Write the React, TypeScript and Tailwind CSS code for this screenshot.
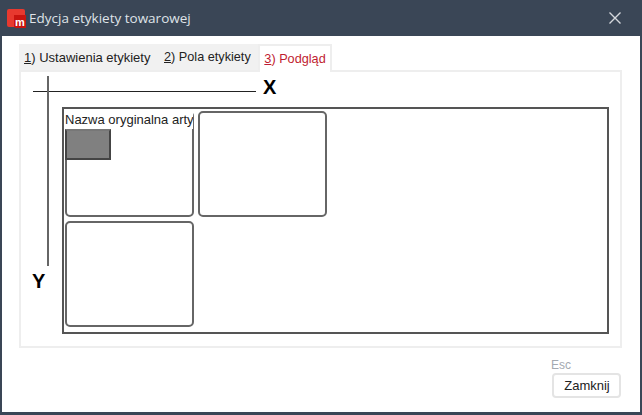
const labels = [
  { id: "a", pos: "left-[1px] top-[2px]" },
  { id: "b", pos: "left-[134px] top-[2px]" },
  { id: "c", pos: "left-[1px] top-[112px]" },
];

function AppIcon() {
  return (
    <svg width="19" height="19" viewBox="0 0 19 19" className="shrink-0">
      <rect x="0" y="0" width="18" height="18" rx="2" fill="#e8392f" />
      <path d="M7 6h12v13H9a2 2 0 0 1-2-2z" fill="#c9140f" />
      <text x="13" y="16.5" textAnchor="middle" fontSize="11" fontWeight="700" fill="#fff" fontFamily="'Liberation Sans', sans-serif">
        m
      </text>
    </svg>
  );
}

export default function App() {
  return (
    <div className="flex h-[415px] w-[642px] flex-col bg-[#3a4656] font-['Liberation_Sans',Arial,sans-serif]">
      <div className="flex h-[36px] shrink-0 items-center pl-[7px] pr-[20px]">
        <AppIcon />
        <span className="ml-[3px] flex-1 font-['Open_Sans',sans-serif] text-[13.5px] text-[#dfe3e8]">Edycja etykiety towarowej</span>
        <svg width="14" height="14" viewBox="0 0 14 14" fill="none" stroke="#d5d8dc" strokeWidth="1.4">
          <path d="M1.5 1.5l11 11M12.5 1.5l-11 11" />
        </svg>
      </div>

      <div className="mx-[2px] mb-[3px] flex flex-1 flex-col bg-white px-[17px] pt-[8px]">
        <div className="flex h-[26px] leading-none">
          <div className="flex w-[140px] items-center bg-[#f1f1f1] pl-[5px] text-[13px] text-[#222]">
            <span><u>1</u>) Ustawienia etykiety</span>
          </div>
          <div className="flex w-[99px] items-center bg-[#f1f1f1] pl-[5px] text-[12.7px] text-[#222]">
            <span><u>2</u>) Pola etykiety</span>
          </div>
          <div className="z-10 -mb-[2px] flex w-[74px] items-center justify-center border-x-2 border-t-2 border-[#eeeeee] bg-white text-[12.7px] text-[#c01c30]">
            <span><u>3</u>) Podgląd</span>
          </div>
        </div>

        <div className="relative h-[278px] w-[603px] border-2 border-[#eeeeee] bg-white">
          {/* axes */}
          <div className="absolute left-[12px] top-[19px] h-px w-[223px] bg-[#222]" />
          <div className="absolute left-[26px] top-[4px] h-[190px] w-[2px] bg-[#666]" />
          <span className="absolute left-[242px] top-[4px] text-[20px] font-bold leading-[22px] text-black">X</span>
          <span className="absolute left-[11px] top-[198px] text-[20px] font-bold leading-[22px] text-black">Y</span>

          {/* label sheet */}
          <div className="absolute left-[41px] top-[35px] h-[227px] w-[547px] border-2 border-[#555]">
            {labels.map((l) => (
              <div key={l.id} className={`absolute ${l.pos} h-[106px] w-[129px] overflow-hidden rounded-[5px] border-2 border-[#666] bg-white`} />
            ))}
            {/* first label's content sits on top of its rounded corner */}
            <div className="absolute left-[1px] top-0 h-[20px] w-[128px] overflow-hidden bg-white text-[13px] leading-[22px] whitespace-nowrap text-[#222]">
              Nazwa oryginalna artykułu
            </div>
            <div className="absolute left-[1px] top-[20px] h-[31px] w-[46px] border-x-2 border-b-2 border-t-2 border-x-[#444] border-b-[#444] border-t-[#777] bg-[#808080]" />
          </div>
        </div>

        <div className="flex flex-1 flex-col items-end">
          <span className="mr-[52px] mt-[10px] text-[12px] leading-[14px] text-[#a3a9b0]">Esc</span>
          <button className="mr-[2px] mt-[1px] h-[25px] w-[69px] rounded-[4px] border-2 border-[#e4e4e4] bg-white pl-[1px] text-[13px] text-[#222]">
            Zamknij
          </button>
        </div>
      </div>
    </div>
  );
}
